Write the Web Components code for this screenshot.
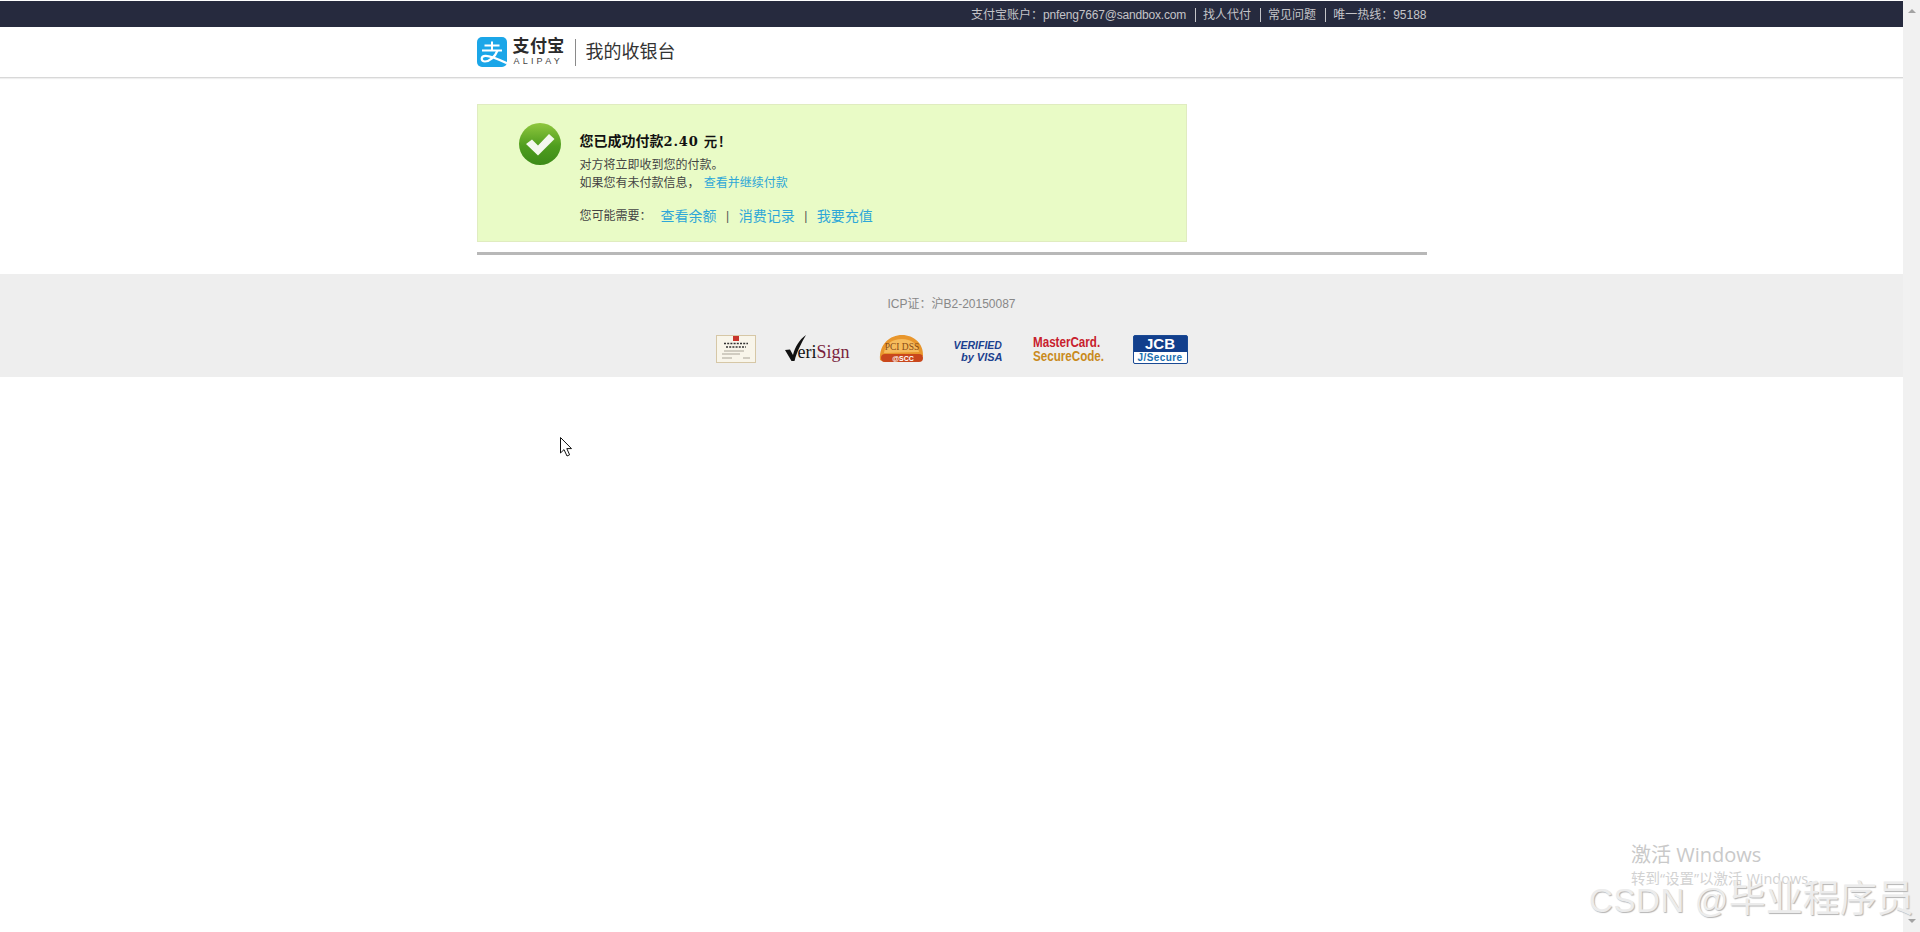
<!DOCTYPE html>
<html lang="zh-CN">
<head>
<meta charset="utf-8">
<title>我的收银台</title>
<style>
  html, body { margin: 0; height: 100%; background: #fff; overflow: hidden; }
  body { font-family: "Liberation Sans", "Noto Sans CJK SC", sans-serif; }
</style>
</head>
<body>
<pay-page>
  <top-bar></top-bar>
  <brand-header></brand-header>
  <success-box amount="2.40"></success-box>
  <site-footer></site-footer>
</pay-page>

<script>
const FONT = `"Liberation Sans", "Noto Sans CJK SC", sans-serif`;

class PayPage extends HTMLElement {
  connectedCallback() {
    this.attachShadow({ mode: "open" });
    this.shadowRoot.innerHTML = `
      <style>
        :host { display: flex; height: 932px; position: relative; overflow: hidden; font-family: ${FONT}; }
        .main { flex: 1; min-width: 0; }
        .bar { width: 17px; background: #f1f1f1; display: flex; flex-direction: column; justify-content: space-between; align-items: center; padding: 9px 0; box-sizing: border-box; }
        .arrow { width: 0; height: 0; border-left: 4px solid transparent; border-right: 4px solid transparent; }
        .up { border-bottom: 4px solid #a3a3a3; }
        .down { border-top: 4px solid #a3a3a3; }
        .cursor { position: absolute; left: 559px; top: 436px; }
        .mark { position: absolute; white-space: nowrap; color: #c9c9c9; font-family: "Open Sans", "Noto Sans CJK SC", sans-serif; }
        .m1 { left: 1631px; top: 843px; font-size: 20px; line-height: 24px; }
        .m2 { left: 1631px; top: 870px; font-size: 14.5px; line-height: 18px; color: #d2d2d2; }
        .csdn { left: 1589px; top: 876px; font-family: ${FONT}; font-size: 33px; line-height: 48px; color: #ececec; letter-spacing: .6px; text-shadow: 1px 1px 1px #b4b4b4; }
        .csdn span { font-size: 37px; letter-spacing: 0; }
      </style>
      <div class="main"><slot></slot></div>
      <div class="bar"><div class="arrow up"></div><div class="arrow down"></div></div>
      <div class="mark m1">激活 Windows</div>
      <div class="mark m2">转到“设置”以激活 Windows。</div>
      <div class="mark csdn">CSDN @<span>毕业程序员</span></div>
      <svg class="cursor" width="14" height="22" viewBox="0 0 14 22">
        <path d="M1.5 1.5 V17 L5 13.6 L8 20 L10.6 18.8 L7.8 12.6 H12.5 Z" fill="#fff" stroke="#111" stroke-width="1"/>
      </svg>
    `;
  }
}

class TopBar extends HTMLElement {
  connectedCallback() {
    this.attachShadow({ mode: "open" });
    this.shadowRoot.innerHTML = `
      <style>
        :host { display: block; background: #262a3e; height: 26px; margin-top: 1px; }
        .wrap { width: 950px; margin: 0 auto; height: 26px; padding-top: 2px; box-sizing: border-box; display: flex; justify-content: flex-end; align-items: center; color: #c4c4c8; font-size: 12px; }
        span { line-height: 14px; }
        span + span { border-left: 1px solid #c4c4c8; margin-left: 9px; padding-left: 7px; }
        em { font-style: normal; letter-spacing: -.18px; }
      </style>
      <div class="wrap">
        <span>支付宝账户：<em>pnfeng7667@sandbox.com</em></span>
        <span>找人代付</span>
        <span>常见问题</span>
        <span>唯一热线：95188</span>
      </div>
    `;
  }
}

class BrandHeader extends HTMLElement {
  connectedCallback() {
    this.attachShadow({ mode: "open" });
    this.shadowRoot.innerHTML = `
      <style>
        :host { display: block; height: 50px; border-bottom: 1px solid #d8d8d8; box-shadow: 0 1px 1px #efefef; }
        .wrap { width: 950px; height: 50px; margin: 0 auto; display: flex; align-items: center; }
        svg { display: block; }
        .brand { margin-left: 6px; width: 56px; color: #2b2b2b; }
        .cn { font-size: 17px; line-height: 18px; font-weight: 700; letter-spacing: .4px; white-space: nowrap; }
        .en { font-size: 9px; line-height: 10px; letter-spacing: 3.2px; color: #444; white-space: nowrap; padding-left: 1px; }
        .line { width: 1px; height: 27px; background: #8a8a8a; margin: 0 10px 0 6px; }
        .title { font-size: 18px; line-height: 24px; color: #333; }
      </style>
      <div class="wrap">
        <svg width="30" height="30" viewBox="0 0 30 30">
          <rect width="30" height="30" rx="5" fill="#1ba6e8"/>
          <path d="M7.5 8.5 H22.5 M15 4.5 V13.5 M5 13.5 H25" stroke="#fff" stroke-width="2" fill="none"/>
          <path d="M20.5 13.5 C18 20 12.5 24.5 8 24.5 C3.5 24.5 3.5 19 8.5 18.8 C13.5 18.6 21 22 30 26.2" stroke="#fff" stroke-width="2.2" fill="none"/>
        </svg>
        <div class="brand">
          <div class="cn">支付宝</div>
          <div class="en">ALIPAY</div>
        </div>
        <div class="line"></div>
        <div class="title">我的收银台</div>
      </div>
    `;
  }
}

class SuccessBox extends HTMLElement {
  connectedCallback() {
    const amount = this.getAttribute("amount");
    this.attachShadow({ mode: "open" });
    this.shadowRoot.innerHTML = `
      <style>
        :host { display: block; width: 950px; margin: 26px auto 0; padding-bottom: 10px; border-bottom: 3px solid #b8b8b8; }
        .box { width: 710px; height: 138px; box-sizing: border-box; background: #e9fbc6; border: 1px solid #e0ecc0; display: flex; padding: 17px 0 0 40px; color: #444; font-size: 12px; }
        svg { display: block; flex: none; }
        .body { margin-left: 18px; }
        h3 { margin: 9px 0 0; font-size: 14px; line-height: 20px; font-weight: 700; color: #111; white-space: nowrap; }
        h3 b { font-family: "DejaVu Serif", serif; font-size: 13px; letter-spacing: .9px; }
        p { margin: 0; line-height: 18px; }
        .first { margin-top: 4px; }
        a { color: #2ea7d8; text-decoration: none; }
        .sp { margin-left: 1px; }
        .need { margin-top: 14px; display: flex; align-items: center; line-height: 20px; }
        .need a { font-size: 14px; }
        .need a.go { margin-left: 9px; }
        .need i { font-style: normal; color: #555; margin: 0 9.5px; font-size: 12px; }
      </style>
      <div class="box">
        <svg width="44" height="44" viewBox="0 0 44 44">
          <defs>
            <linearGradient id="g" x1="0" y1="0" x2="0" y2="1">
              <stop offset="0" stop-color="#8fc73e"/>
              <stop offset=".55" stop-color="#4f9d1e"/>
              <stop offset="1" stop-color="#3c8a18"/>
            </linearGradient>
          </defs>
          <circle cx="22" cy="22" r="21" fill="url(#g)"/>
          <path d="M8 22 L14 17.5 L20 23.5 L31 12 L36.5 17 L20 33.5 Z" fill="#f4f8ee"/>
        </svg>
        <div class="body">
          <h3>您已成功付款<b>${amount} 元！</b></h3>
          <p class="first">对方将立即收到您的付款。</p>
          <p>如果您有未付款信息， <a class="sp" href="#">查看并继续付款</a></p>
          <p class="need">您可能需要：<a class="go" href="#">查看余额</a><i>|</i><a href="#">消费记录</a><i>|</i><a href="#">我要充值</a></p>
        </div>
      </div>
    `;
  }
}

class SiteFooter extends HTMLElement {
  connectedCallback() {
    this.attachShadow({ mode: "open" });
    this.shadowRoot.innerHTML = `
      <style>
        :host { display: block; margin-top: 19px; height: 103px; background: #eee; }
        .icp { text-align: center; font-size: 12px; line-height: 18px; padding-top: 21px; color: #888; }
        .logos { display: flex; justify-content: center; align-items: center; gap: 29px; margin-top: 21px; height: 30px; }
        svg { display: block; flex: none; }
        .vs { width: 64px; height: 30px; display: flex; align-items: flex-end; font: 18px/24px "Liberation Serif", serif; color: #111; white-space: nowrap; position: relative; padding-left: 13px; box-sizing: border-box; }
        .vs svg { position: absolute; left: 0; top: 0; }
        .vs span { color: #7a1f3d; }
        .jcb { width: 55px; height: 29px; box-sizing: border-box; border: 1px solid #1a4a94; border-radius: 2px; background: #123f8c; color: #fff; text-align: center; font-weight: 700; overflow: hidden; }
        .jcb div { font-size: 15px; line-height: 16px; }
        .jcb span { display: block; background: #fff; color: #1a6fb0; font-size: 10px; line-height: 11px; letter-spacing: .4px; }
        .visa { width: 50px; color: #1b3f8f; font-weight: 700; font-style: italic; padding-top: 3px; }
        .visa div { font-size: 10.5px; line-height: 12px; white-space: nowrap; }
        .visa div + div { text-align: right; padding-right: 1px; font-size: 11px; }
        .mc { width: 71px; font-weight: 700; font-size: 14px; line-height: 14px; white-space: nowrap; color: #c8202c; }
        .mc div { transform: scaleX(.83); transform-origin: left; }
        .mc div + div { color: #c98a1c; }
      </style>
      <div class="icp">ICP证：沪B2-20150087</div>
      <div class="logos">
        <svg width="40" height="28" viewBox="0 0 40 28">
          <rect x=".5" y=".5" width="39" height="27" fill="#f8f5ea" stroke="#d6c7a6"/>
          <rect x="17" y="1" width="6" height="5" fill="#c8352c"/>
          <path d="M8 8.5 H32 M10 12 H30" stroke="#333" stroke-width="1.4" stroke-dasharray="2 1.2"/>
          <path d="M8 16 H28 M6 19 H24 M6 23 H16 M27 23 H34" stroke="#a9a498" stroke-width="1"/>
        </svg>
        <div class="vs">
          <svg width="22" height="28" viewBox="0 0 22 28">
            <path d="M0 16 L5 15.5 L8 21 C10 13 14 6 21 1 C17 8 12 17 9.5 27 H6.5 Z" fill="#111"/>
          </svg>
          <div>eri<span>Sign</span></div>
        </div>
        <svg width="47" height="30" viewBox="0 0 47 30">
          <path d="M2 26 C1 10 12 1 24 1 C36 1 46 10 45 22 L30 23 L6 28 Z" fill="#e8962c"/>
          <path d="M6 19 C7 10 14 5 24 5 C33 5 40 10 41 18 Z" fill="#f6bb5c"/>
          <text x="24" y="16" text-anchor="middle" font-family="Liberation Serif" font-size="9.5" fill="#8a4a14">PCI DSS</text>
          <rect x="3" y="20" width="42" height="8" rx="4" fill="#c9471c"/>
          <text x="25" y="27" text-anchor="middle" font-family="Liberation Sans" font-weight="700" font-size="7" fill="#fff">@SCC</text>
        </svg>
        <div class="visa"><div>VERIFIED</div><div>by VISA</div></div>
        <div class="mc"><div>MasterCard.</div><div>SecureCode.</div></div>
        <div class="jcb"><div>JCB</div><span>J/Secure</span></div>
      </div>
    `;
  }
}

customElements.define("pay-page", PayPage);
customElements.define("top-bar", TopBar);
customElements.define("brand-header", BrandHeader);
customElements.define("success-box", SuccessBox);
customElements.define("site-footer", SiteFooter);
</script>
</body>
</html>
